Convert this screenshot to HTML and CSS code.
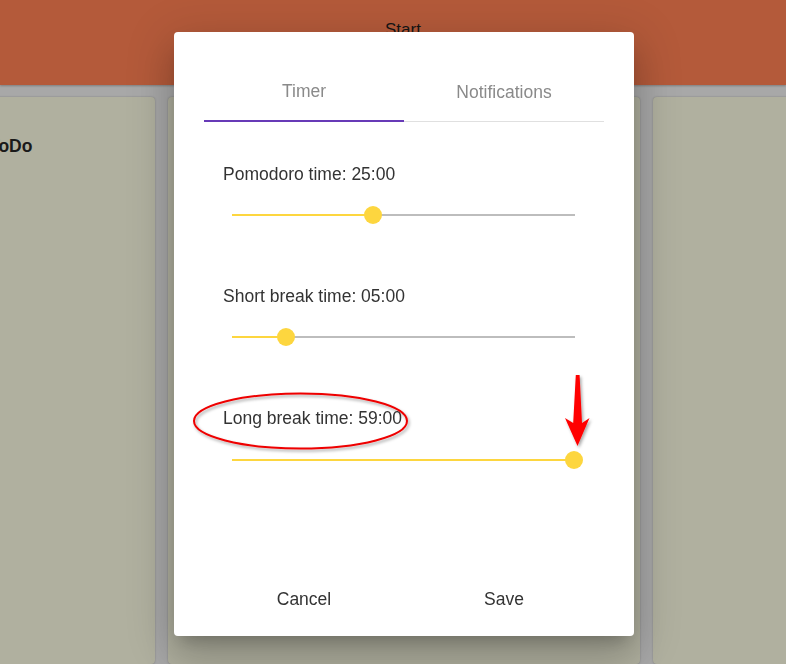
FILE: index.html
```html
<!DOCTYPE html>
<html>
<head>
<meta charset="utf-8">
<link rel="stylesheet" href="styles.css">
</head>
<body>
<header class="topbar"><span class="start">Start</span></header>
<main class="board">
  <section class="column column-todo"><h2 class="column-title">ToDo</h2></section>
  <section class="column column-wide"></section>
  <section class="column column-next"></section>
</main>

<div class="dialog">
  <nav class="tabs">
    <div class="tab tab-active">Timer</div>
    <div class="tab">Notifications</div>
  </nav>
  <div class="settings">
    <div class="setting">
      <div class="setting-label">Pomodoro time: 25:00</div>
      <div class="slider">
        <div class="track"><div class="fill" style="width:41.1%"></div><div class="rest"></div></div>
        <div class="thumb" style="left:41.1%"></div>
      </div>
    </div>
    <div class="setting">
      <div class="setting-label">Short break time: 05:00</div>
      <div class="slider">
        <div class="track"><div class="fill" style="width:15.7%"></div><div class="rest"></div></div>
        <div class="thumb" style="left:15.7%"></div>
      </div>
    </div>
    <div class="setting">
      <div class="setting-label">Long break time: 59:00</div>
      <div class="slider">
        <div class="track"><div class="fill" style="width:100%"></div><div class="rest"></div></div>
        <div class="thumb" style="left:99.8%"></div>
      </div>
    </div>
  </div>
  <div class="actions">
    <button class="action">Cancel</button>
    <button class="action">Save</button>
  </div>
</div>

<svg class="annotation" width="786" height="664" viewBox="0 0 786 664">
  <defs>
    <filter id="sh" x="-20%" y="-20%" width="140%" height="140%">
      <feDropShadow dx="1.5" dy="2" stdDeviation="1.5" flood-color="#000" flood-opacity="0.35"/>
    </filter>
  </defs>
  <ellipse cx="300.5" cy="421" rx="106.5" ry="27.5" fill="none" stroke="#ee0000" stroke-width="2" filter="url(#sh)"/>
  <path d="M575.8,375 L579.6,375 L582,423 L589.5,418 L577.5,446 L565,418 L573.2,423 Z" fill="#ff0000" filter="url(#sh)"/>
</svg>
</body>
</html>
```

FILE: styles.css
```css
html, body {
  margin: 0;
  padding: 0;
}
body {
  width: 786px;
  height: 664px;
  overflow: hidden;
  background: #a8a8a8;
  font-family: "Liberation Sans", Arial, sans-serif;
}
.topbar {
  height: 85px;
  background: #b45a3a;
  box-shadow: 0 1px 2px rgba(0,0,0,0.25);
  box-sizing: border-box;
  padding: 20px 0 0 385px;
  position: relative;
  z-index: 1;
}
.start {
  font-size: 17px;
  color: #151515;
}
.board {
  display: flex;
  gap: 13px;
  margin-left: -27px;
  padding-top: 12px;
  height: 579px;
  box-sizing: border-box;
}
.column {
  background: #b0b09f;
  border-radius: 4px;
  box-shadow: 0 0 2px rgba(0,0,0,0.25);
  flex: none;
}
.column-todo {
  width: 182px;
  box-sizing: border-box;
  padding: 39px 16px 0;
}
.column-wide { width: 472px; }
.column-next { width: 200px; }
.column-title {
  margin: 0;
  font-size: 17.5px;
  font-weight: bold;
  color: #1a1a1a;
  line-height: 20px;
}

.dialog {
  position: fixed;
  left: 174px;
  top: 32px;
  width: 460px;
  height: 604px;
  box-sizing: border-box;
  padding: 30px 30px 19px;
  background: #fff;
  border-radius: 4px;
  display: flex;
  flex-direction: column;
  box-shadow: 0 11px 15px -7px rgba(0,0,0,.2), 0 24px 38px 3px rgba(0,0,0,.14), 0 9px 46px 8px rgba(0,0,0,.12);
  z-index: 2;
}
.tabs {
  display: grid;
  grid-template-columns: 1fr 1fr;
  height: 60px;
}
.tab {
  display: flex;
  align-items: center;
  justify-content: center;
  font-size: 17.5px;
  color: #8a8a8a;
  border-bottom: 1px solid #e0e0e0;
  padding-top: 1px;
}
.tab-active {
  border-bottom: 2px solid #673ab7;
}
.settings {
  padding: 42px 29px 0 19px;
}
.setting {
  margin-bottom: 61px;
}
.setting-label {
  font-size: 17.5px;
  line-height: 20px;
  color: #333;
}
.slider {
  position: relative;
  height: 20px;
  margin: 21px 0 0 9px;
  display: flex;
  align-items: center;
}
.setting:last-child .slider {
  margin-top: 22px;
}
.track {
  flex: 1;
  height: 2px;
  display: flex;
}
.fill {
  background: #fdd63f;
  height: 100%;
}
.rest {
  flex: 1;
  background: #bdbdbd;
}
.thumb {
  position: absolute;
  top: 50%;
  width: 18px;
  height: 18px;
  border-radius: 50%;
  background: #fdd63f;
  transform: translate(-50%, -50%);
}
.actions {
  margin-top: auto;
  display: grid;
  grid-template-columns: 1fr 1fr;
  height: 36px;
}
.action {
  border: 0;
  background: none;
  font-family: "Liberation Sans", Arial, sans-serif;
  font-size: 17.5px;
  color: #333;
  padding: 0;
}
.annotation {
  position: fixed;
  left: 0;
  top: 0;
  z-index: 3;
  pointer-events: none;
}
```
